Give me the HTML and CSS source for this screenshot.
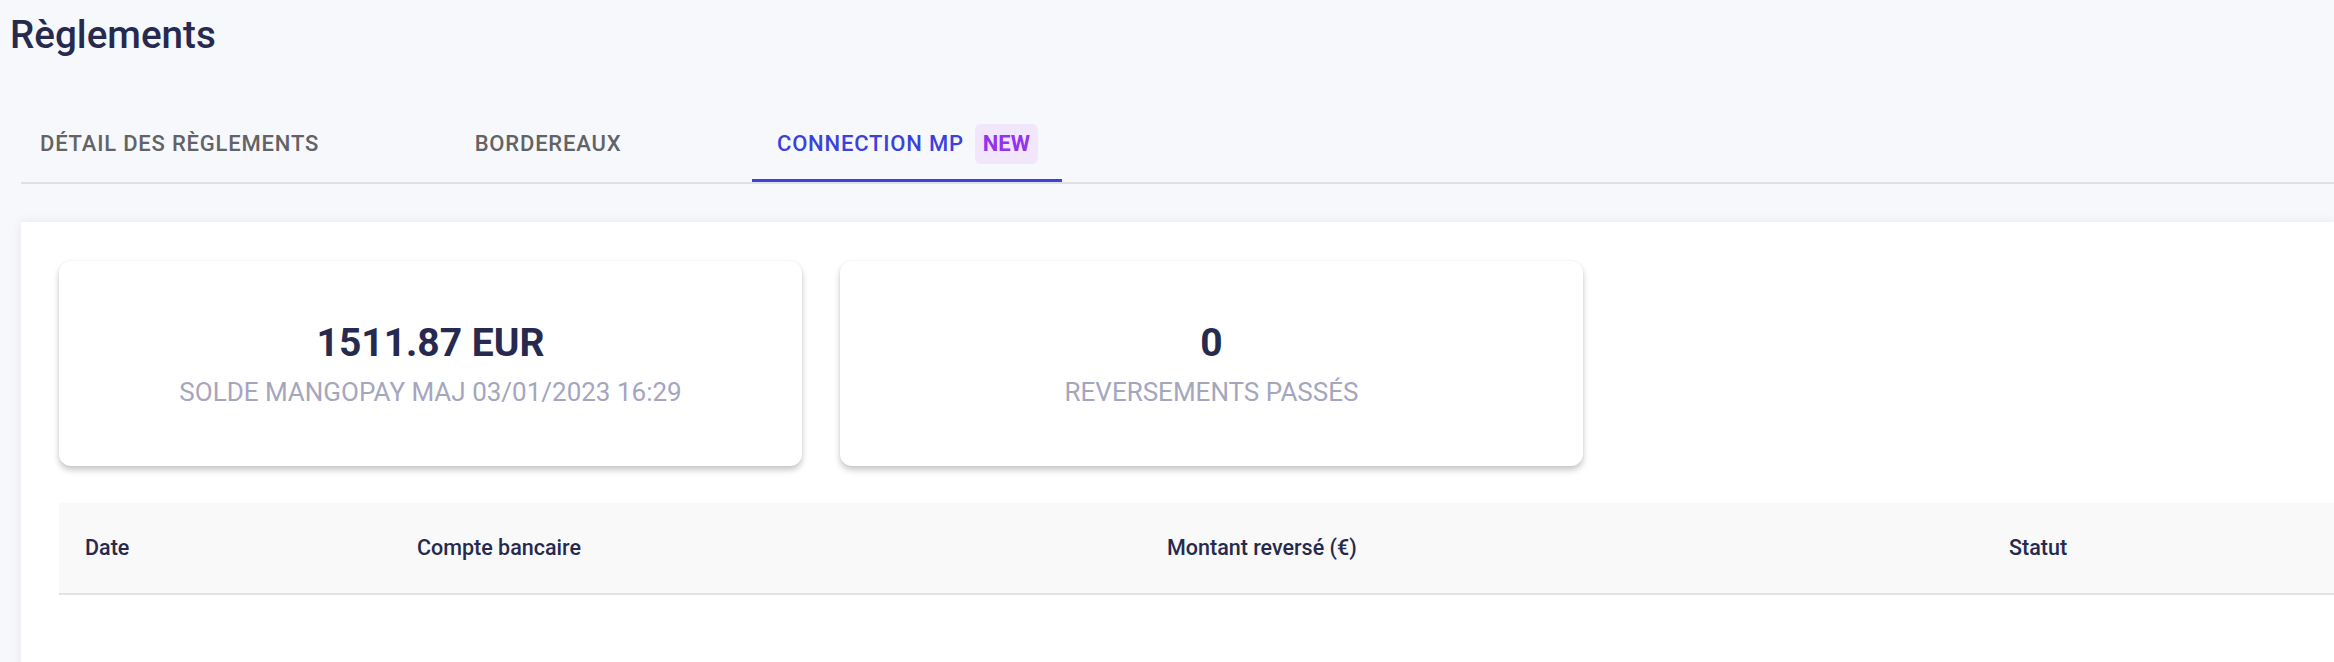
FILE: index.html
```html
<!DOCTYPE html>
<html lang="fr">
<head>
<meta charset="utf-8">
<title>Règlements</title>
<link rel="stylesheet" href="styles.css">
</head>
<body>
  <h1 class="page-title">Règlements</h1>
  <nav class="tabs">
    <div class="tab tab-first">DÉTAIL DES RÈGLEMENTS</div>
    <div class="tab tab-second">BORDEREAUX</div>
    <div class="tab tab-active">CONNECTION MP <span class="badge">NEW</span></div>
  </nav>
  <main class="panel">
    <section class="stats">
      <div class="stat-card">
        <div class="stat-value">1511.87 EUR</div>
        <div class="stat-label">SOLDE MANGOPAY MAJ 03/01/2023 16:29</div>
      </div>
      <div class="stat-card">
        <div class="stat-value">0</div>
        <div class="stat-label">REVERSEMENTS PASSÉS</div>
      </div>
    </section>
    <div class="table-head">
      <div class="th">Date</div>
      <div class="th">Compte bancaire</div>
      <div class="th">Montant reversé (€)</div>
      <div class="th">Statut</div>
    </div>
  </main>
</body>
</html>
```

FILE: styles.css
```css
html, body {
  margin: 0;
  padding: 0;
  background: #f7f8fc;
  font-family: Roboto, "Liberation Sans", sans-serif;
  overflow: hidden;
}

.page-title {
  margin: 0;
  padding: 16px 0 0 10px;
  font-size: 38.6px;
  line-height: 38px;
  font-weight: 500;
  color: #262a4e;
}

.tabs {
  display: flex;
  margin: 54px 0 0 21px;
  border-bottom: 2px solid #dfe0e6;
}

.tab {
  box-sizing: border-box;
  height: 74px;
  display: flex;
  align-items: center;
  font-size: 22px;
  line-height: 22px;
  font-weight: 500;
  letter-spacing: 0.8px;
  color: #626366;
  border-bottom: 3px solid transparent;
  white-space: nowrap;
}

.tab-first {
  padding: 0 24px 0 19px;
  width: 323px;
}

.tab-second {
  width: 408px;
  justify-content: center;
}

.tab-active {
  padding: 0 24px 0 25px;
  color: #3b42db;
  border-bottom-color: #3b42db;
}

.badge {
  display: inline-flex;
  align-items: center;
  height: 40px;
  margin-left: 11px;
  padding: 0 8px;
  border-radius: 6px;
  background: #f2e6fd;
  color: #9333ea;
  font-weight: 700;
  letter-spacing: 0;
}

.panel {
  margin: 38px 0 0 21px;
  padding: 39px 0 80px 38px;
  background: #ffffff;
  box-shadow: 0 0 10px rgba(40, 44, 80, 0.08);
  min-height: 400px;
}

.stats {
  display: flex;
  gap: 38px;
}

.stat-card {
  width: 743px;
  height: 205px;
  border-radius: 12px;
  background: #ffffff;
  box-shadow: 0 4px 6px rgba(0, 0, 0, 0.22), 0 0 3px rgba(0, 0, 0, 0.05);
  display: flex;
  flex-direction: column;
  align-items: center;
  justify-content: center;
  padding-top: 2px;
  box-sizing: border-box;
}

.stat-value {
  font-size: 39px;
  line-height: 39px;
  font-weight: 700;
  color: #262a4e;
}

.stat-label {
  margin-top: 16px;
  font-size: 26px;
  line-height: 26px;
  font-weight: 400;
  color: #a5a6bd;
}

.table-head {
  margin-top: 37px;
  height: 90px;
  display: grid;
  grid-template-columns: 332px 750px 842px 1fr;
  align-items: center;
  background: #f9f9f9;
  border-bottom: 2px solid #e3e3e6;
}

.th {
  padding-left: 26px;
  font-size: 21.5px;
  line-height: 22px;
  font-weight: 500;
  color: #262a4e;
}
```
